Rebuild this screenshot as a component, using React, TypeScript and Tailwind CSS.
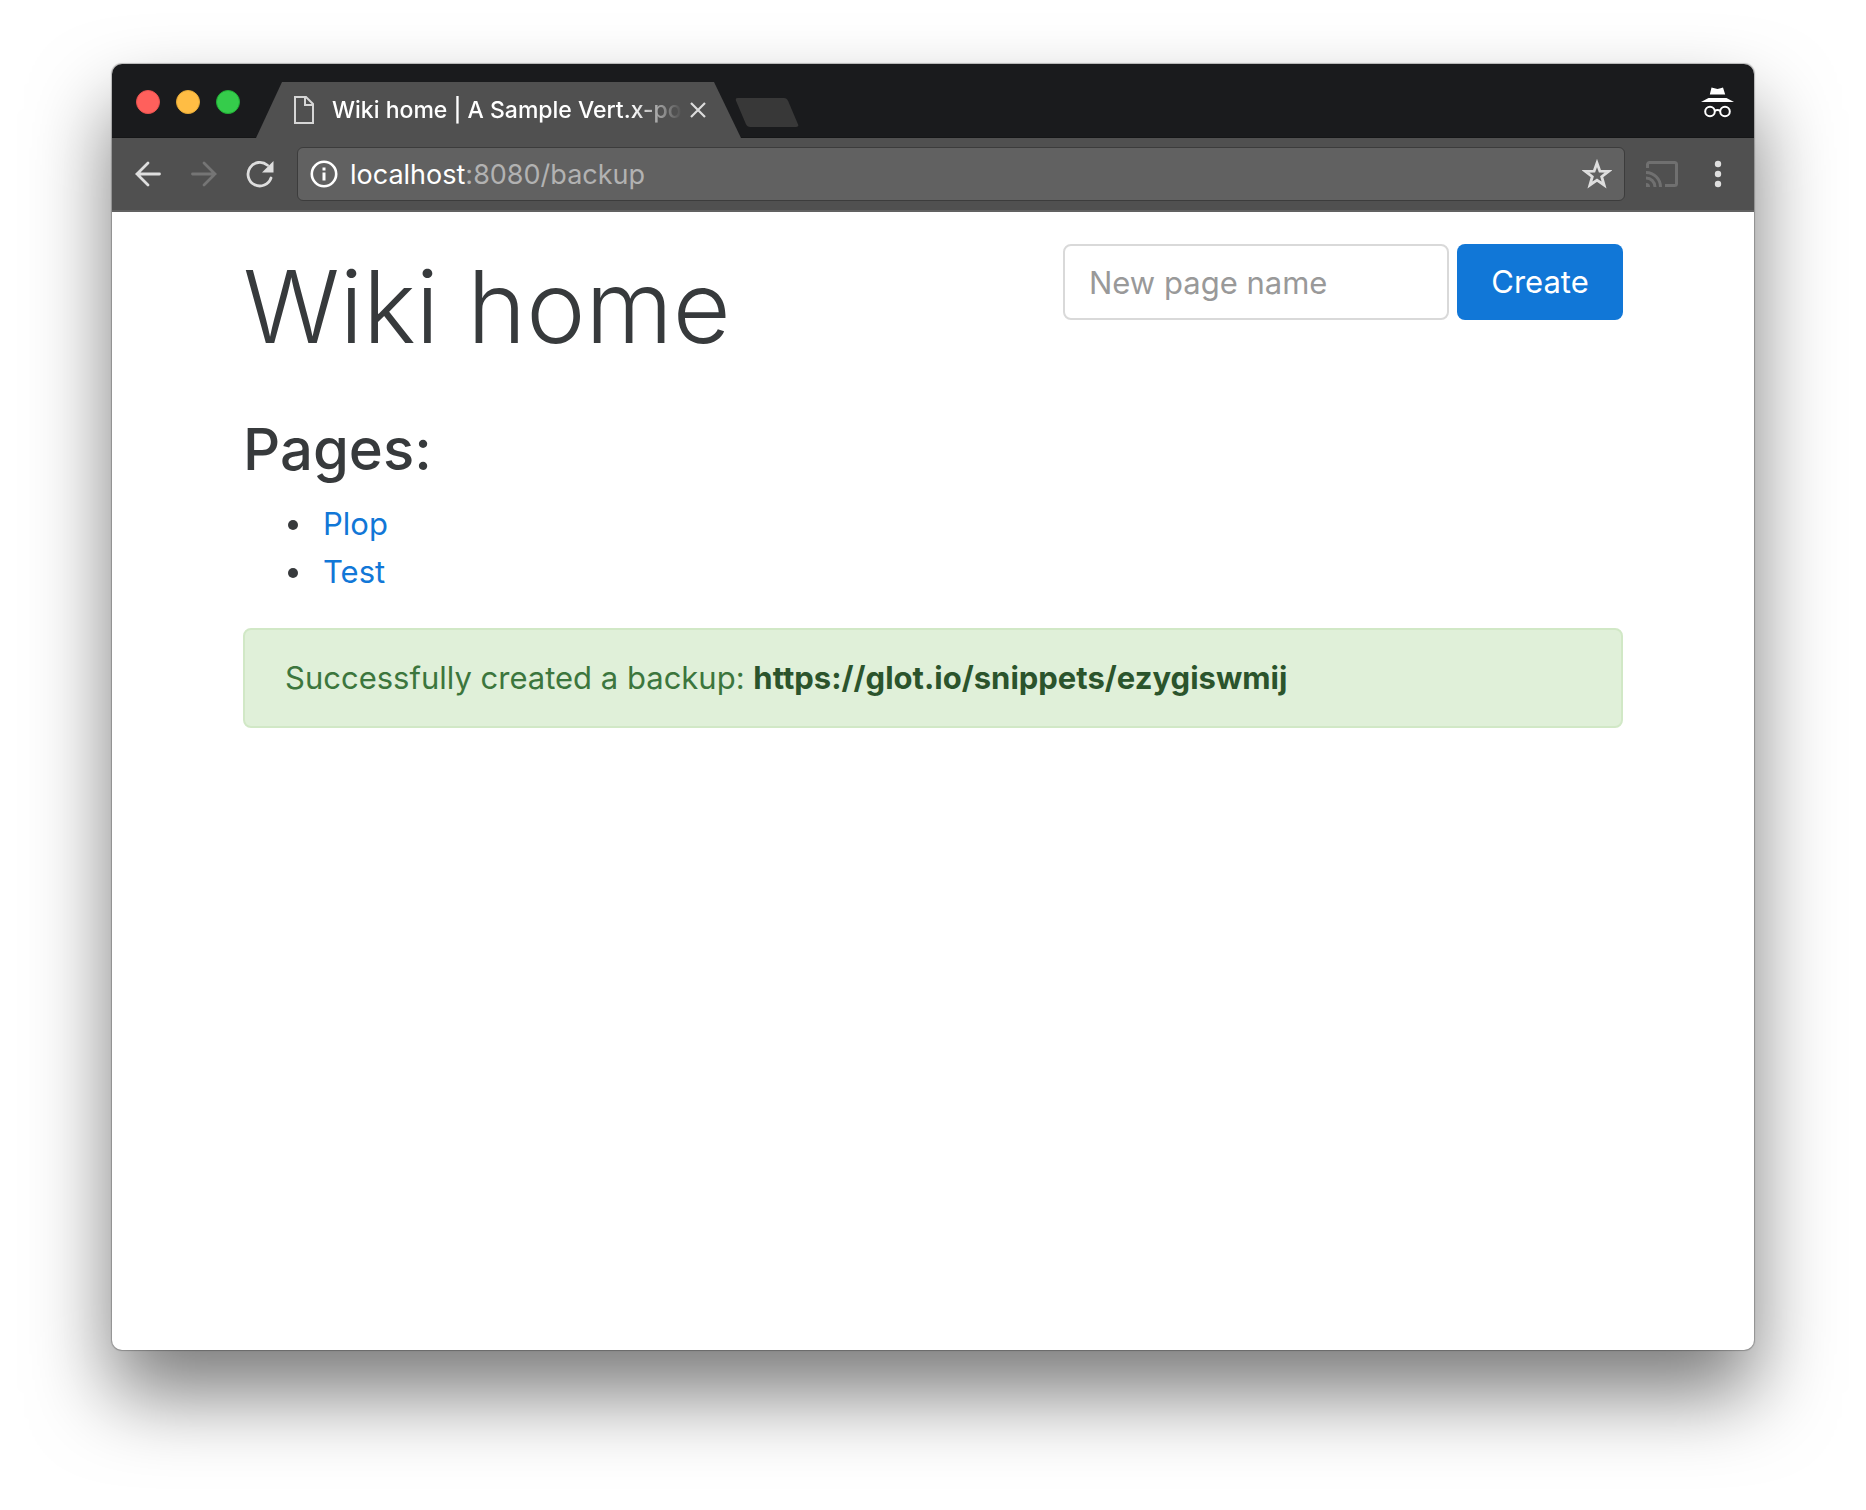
const pages = ["Plop", "Test"];

function TabStrip() {
  return (
    <div className="flex h-[74px] items-end border-b border-[#151617] bg-[#1a1b1d]">
      <div className="flex h-full items-center gap-4 pl-6 pt-[3px]">
        <button aria-label="Close window" className="size-6 rounded-full border border-[#e8524e] bg-[#ff605c]" />
        <button aria-label="Minimize window" className="size-6 rounded-full border border-[#e5a935] bg-[#ffbd44]" />
        <button aria-label="Zoom window" className="size-6 rounded-full border border-[#1fae34] bg-[#35cc4b]" />
      </div>
      <div className="-mb-px ml-4 flex h-14 w-[485px] items-center bg-[#505050] pl-[38px] pr-[35px] [clip-path:polygon(26px_0,458px_0,100%_100%,0_100%)]">
        <svg aria-hidden="true" className="shrink-0" width="20" height="28" viewBox="0 0 20 28" fill="none" stroke="#d6d6d6" strokeWidth="2">
          <path d="M1 1h11l7 7v19H1z" />
          <path d="M11 1v8h8" />
        </svg>
        <span className="ml-[18px] flex-1 whitespace-nowrap text-[23px] font-medium leading-8 text-white [mask-image:linear-gradient(to_right,black_300px,transparent_350px)]">
          Wiki home | A Sample Vert.x-po
        </span>
        <button aria-label="Close tab" className="shrink-0">
          <svg width="16" height="16" viewBox="0 0 16 16" stroke="#dcdcdc" strokeWidth="2.2">
            <path d="M1 1l14 14M15 1L1 15" />
          </svg>
        </button>
      </div>
      <button aria-label="New tab" className="mb-[10px] h-[29px] w-[52px] skew-x-[23deg] rounded-[3px] bg-[#383838]" />
      <svg role="img" aria-label="Incognito" className="mb-[19px] ml-auto mr-5" width="33" height="31" viewBox="0 0 33 31">
        <path fill="#fff" d="M10.500 0.500L13.500 1.200L16.500 2L19.500 1.200L22 0.500L24.200 7.500H8.800zM7.500 11H25.500L33 15H0z" />
        <g fill="none" stroke="#fff" strokeWidth="2">
          <circle cx="9" cy="24.500" r="4.800" />
          <circle cx="24" cy="24.500" r="4.800" />
          <path d="M13.500 24q3-2 6 0" />
        </g>
      </svg>
    </div>
  );
}

function Toolbar() {
  return (
    <div className="flex h-[74px] items-center border-b-2 border-[#616161] bg-[#505050] pl-[23px] pr-[32px]">
      <button aria-label="Back">
        <svg width="26" height="26" viewBox="0 0 26 26" fill="none" stroke="#dedede" strokeWidth="2.800" strokeLinecap="round">
          <path d="M24.500 13H2M13 2L2 13l11 11" />
        </svg>
      </button>
      <button aria-label="Forward" className="ml-[30px]">
        <svg width="26" height="26" viewBox="0 0 26 26" fill="none" stroke="#757575" strokeWidth="2.800" strokeLinecap="round">
          <path d="M1.500 13H24M13 2l11 11-11 11" />
        </svg>
      </button>
      <button aria-label="Reload" className="ml-[29px]">
        <svg width="28" height="28" viewBox="0 0 28 28" fill="none">
          <path d="M25 18A11.800 11.800 0 1 1 21.500 5.200" stroke="#dedede" strokeWidth="2.800" strokeLinecap="round" />
          <path d="M27.500 1v11.500H16z" fill="#dedede" />
        </svg>
      </button>
      <div className="ml-[23px] flex h-[54px] flex-1 items-center rounded-md border border-[#3c3c3c] bg-[#616161] px-3">
        <svg role="img" aria-label="Site information" width="28" height="28" viewBox="0 0 28 28" fill="none">
          <circle cx="14" cy="14" r="12.200" stroke="#fff" strokeWidth="2.600" />
          <path d="M14 12.500V20.500M14 7.500v3" stroke="#fff" strokeWidth="3" />
        </svg>
        <div className="ml-3 flex-1 pt-0.5 text-[27px] leading-9 text-[#b2b2b2]">
          <span className="text-white">localhost</span>:8080/backup
        </div>
        <button aria-label="Bookmark this page">
          <svg width="30" height="30" viewBox="0 0 30 30" fill="none" stroke="#dedede" strokeWidth="2.800">
            <path d="M15 4L17.900 12.200L26.500 12.400L19.700 17.700L22.100 26L15 21.100L7.900 26L10.300 17.700L3.500 12.400L12.100 12.200Z" />
          </svg>
        </button>
      </div>
      <button aria-label="Cast" className="ml-[21px]">
        <svg width="32" height="26" viewBox="0 0 32 26" fill="none" stroke="#707070" strokeWidth="3">
          <path d="M1.500 7V3.500a2 2 0 0 1 2-2h25a2 2 0 0 1 2 2v19a2 2 0 0 1-2 2H19" />
          <path d="M0 11.500A14.500 14.500 0 0 1 14.500 26M0 17a9 9 0 0 1 9 9" />
          <path d="M0 22a4 4 0 0 1 4 4H0z" fill="#707070" stroke="none" />
        </svg>
      </button>
      <button aria-label="Menu" className="ml-[36px]">
        <svg width="8" height="28" viewBox="0 0 8 28" fill="#dedede">
          <circle cx="4" cy="4" r="3.200" />
          <circle cx="4" cy="14" r="3.200" />
          <circle cx="4" cy="24" r="3.200" />
        </svg>
      </button>
    </div>
  );
}

export default function App() {
  return (
    <div className="flex min-h-screen flex-col bg-white px-28 pb-40 pt-16 font-[Inter,'Liberation_Sans',sans-serif]">
      <div className="flex flex-1 flex-col overflow-hidden rounded-[10px] bg-white shadow-[0_0_1px_1px_rgba(0,0,0,0.25),0_44px_80px_rgba(0,0,0,0.52)]">
        <TabStrip />
        <Toolbar />
        <main className="mx-auto w-full max-w-[1380px] pt-8 text-[31px] leading-[48px] text-[#373a3c]">
          <div className="flex items-start justify-between">
            <h1 className="text-[100px] font-light leading-[126px]">Wiki home</h1>
            <form className="flex gap-2" onSubmit={(e) => e.preventDefault()}>
              <input
                aria-label="New page name"
                placeholder="New page name"
                className="h-[76px] w-[386px] rounded-lg border-2 border-[#d9d9d9] bg-white px-6 placeholder:text-[#999]"
              />
              <button className="h-[76px] w-[166px] rounded-lg bg-[#1177d7] text-white">Create</button>
            </form>
          </div>
          <h2 className="mt-11 text-[58px] font-medium leading-[70px]">Pages:</h2>
          <ul className="mt-4 list-disc pl-[72px]">
            {pages.map((page) => (
              <li key={page} className="pl-2">
                <a href={"#" + page} className="text-[#1177d7]">{page}</a>
              </li>
            ))}
          </ul>
          <div role="alert" className="mt-8 rounded-lg border-2 border-[#d1e8c6] bg-[#e0f0d9] px-10 py-6 text-[#3c763d]">
            Successfully created a backup:{" "}
            <a href="#backup" className="font-bold text-[#2b542c]">https://glot.io/snippets/ezygiswmij</a>
          </div>
        </main>
      </div>
    </div>
  );
}
